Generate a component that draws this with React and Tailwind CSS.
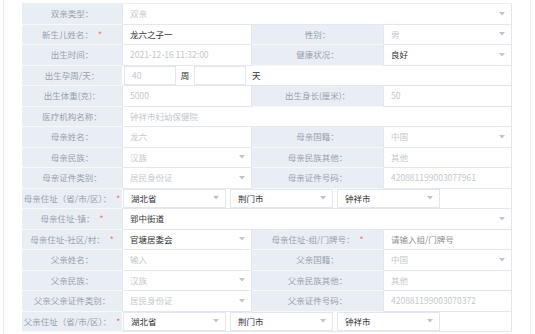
import React from 'react';

const Arrow = () => (
    <svg width="6" height="4" viewBox="0 0 6 4" className="ml-auto shrink-0">
        <polygon points="0,0 6,0 3,3.5" fill="#c0c4cc" />
    </svg>
);

function Label({ text, req }) {
    return (
        <div className="flex items-center justify-center bg-[#e8eef4] border-b border-[#f6f8fa] text-[8.5px] text-[#98a2ad] whitespace-nowrap">
            {text}
            {req && <span className="text-[#f56c6c] ml-[5px]">*</span>}
        </div>
    );
}

function Box({ value, muted, select, className = '' }) {
    return (
        <div className={`flex items-center h-full border-x border-b border-[#e4e7ed] bg-white pl-[7px] pr-[6px] text-[8.5px] whitespace-nowrap ${muted ? 'text-[#c4c8ce]' : 'text-[#303133]'} ${className}`}>
            <span>{value}</span>
            {select && <Arrow />}
        </div>
    );
}

function Cell({ span, children }) {
    return <div className={`${span ? 'col-span-3' : ''} h-full`}>{children}</div>;
}

function Region() {
    return (
        <div className="col-span-3 flex items-center gap-[4px] pl-px h-full border-r border-b border-[#e4e7ed] bg-white">
            <Box value="湖北省" select className="w-[103px] border-t" />
            <Box value="荆门市" select className="w-[103px] border-t" />
            <Box value="钟祥市" select className="w-[103px] border-t" />
        </div>
    );
}

export default function App() {
    return (
        <div className="w-[535px] h-[334px] overflow-hidden bg-white flex font-['Noto_Sans_CJK_SC','Noto_Sans',sans-serif]">
            <div className="w-[3px] shrink-0" />
            <div className="w-px shrink-0 bg-[#e6e8eb]" />
            <div className="w-[18px] shrink-0" />
            <div className="w-[490px] shrink-0 pt-[3px]">
                <div className="grid grid-cols-[100px_130px_131px_129px] auto-rows-[20.5px] border-t border-[#eceff3]">
                    <Label text="双亲类型：" />
                    <Cell span><Box value="双亲" muted select /></Cell>

                    <Label text="新生儿姓名：" req />
                    <Cell><Box value="龙六之子一" /></Cell>
                    <Label text="性别：" />
                    <Cell><Box value="男" muted select /></Cell>

                    <Label text="出生时间：" />
                    <Cell><Box value="2021-12-16 11:32:00" muted /></Cell>
                    <Label text="健康状况：" />
                    <Cell><Box value="良好" select /></Cell>

                    <Label text="出生孕周/天：" />
                    <div className="col-span-3 flex items-center h-full border-r border-b border-[#e4e7ed] bg-white pl-[2px] text-[8.5px] text-[#303133]">
                        <Box value="40" muted className="w-[52px] border-t" />
                        <span className="w-[18px] text-center">周</span>
                        <Box value="" className="w-[52px] border-t" />
                        <span className="ml-[6px]">天</span>
                    </div>

                    <Label text="出生体重(克)：" />
                    <Cell><Box value="5000" muted /></Cell>
                    <Label text="出生身长(厘米)：" />
                    <Cell><Box value="50" muted /></Cell>

                    <Label text="医疗机构名称：" />
                    <Cell span><Box value="钟祥市妇幼保健院" muted /></Cell>

                    <Label text="母亲姓名：" />
                    <Cell><Box value="龙六" muted /></Cell>
                    <Label text="母亲国籍：" />
                    <Cell><Box value="中国" muted select /></Cell>

                    <Label text="母亲民族：" />
                    <Cell><Box value="汉族" muted select /></Cell>
                    <Label text="母亲民族其他：" />
                    <Cell><Box value="其他" muted /></Cell>

                    <Label text="母亲证件类别：" />
                    <Cell><Box value="居民身份证" muted select /></Cell>
                    <Label text="母亲证件号码：" />
                    <Cell><Box value="420881199003077961" muted /></Cell>

                    <Label text="母亲住址（省/市/区）：" req />
                    <Region />

                    <Label text="母亲住址-镇：" req />
                    <Cell span><Box value="郢中街道" select /></Cell>

                    <Label text="母亲住址-社区/村：" req />
                    <Cell><Box value="官塘居委会" select /></Cell>
                    <Label text="母亲住址-组/门牌号：" req />
                    <Cell><Box value="请输入组/门牌号" className="!text-[#8e9095]" /></Cell>

                    <Label text="父亲姓名：" />
                    <Cell><Box value="输入" muted /></Cell>
                    <Label text="父亲国籍：" />
                    <Cell><Box value="中国" muted select /></Cell>

                    <Label text="父亲民族：" />
                    <Cell><Box value="汉族" muted select /></Cell>
                    <Label text="父亲民族其他：" />
                    <Cell><Box value="其他" muted /></Cell>

                    <Label text="父亲父亲证件类别：" />
                    <Cell><Box value="居民身份证" muted select /></Cell>
                    <Label text="父亲证件号码：" />
                    <Cell><Box value="420881199003070372" muted /></Cell>

                    <Label text="父亲住址（省/市/区）：" req />
                    <Region />
                </div>
            </div>
            <div className="w-[18px] shrink-0" />
            <div className="w-px shrink-0 bg-[#eceef1]" />
        </div>
    );
}
